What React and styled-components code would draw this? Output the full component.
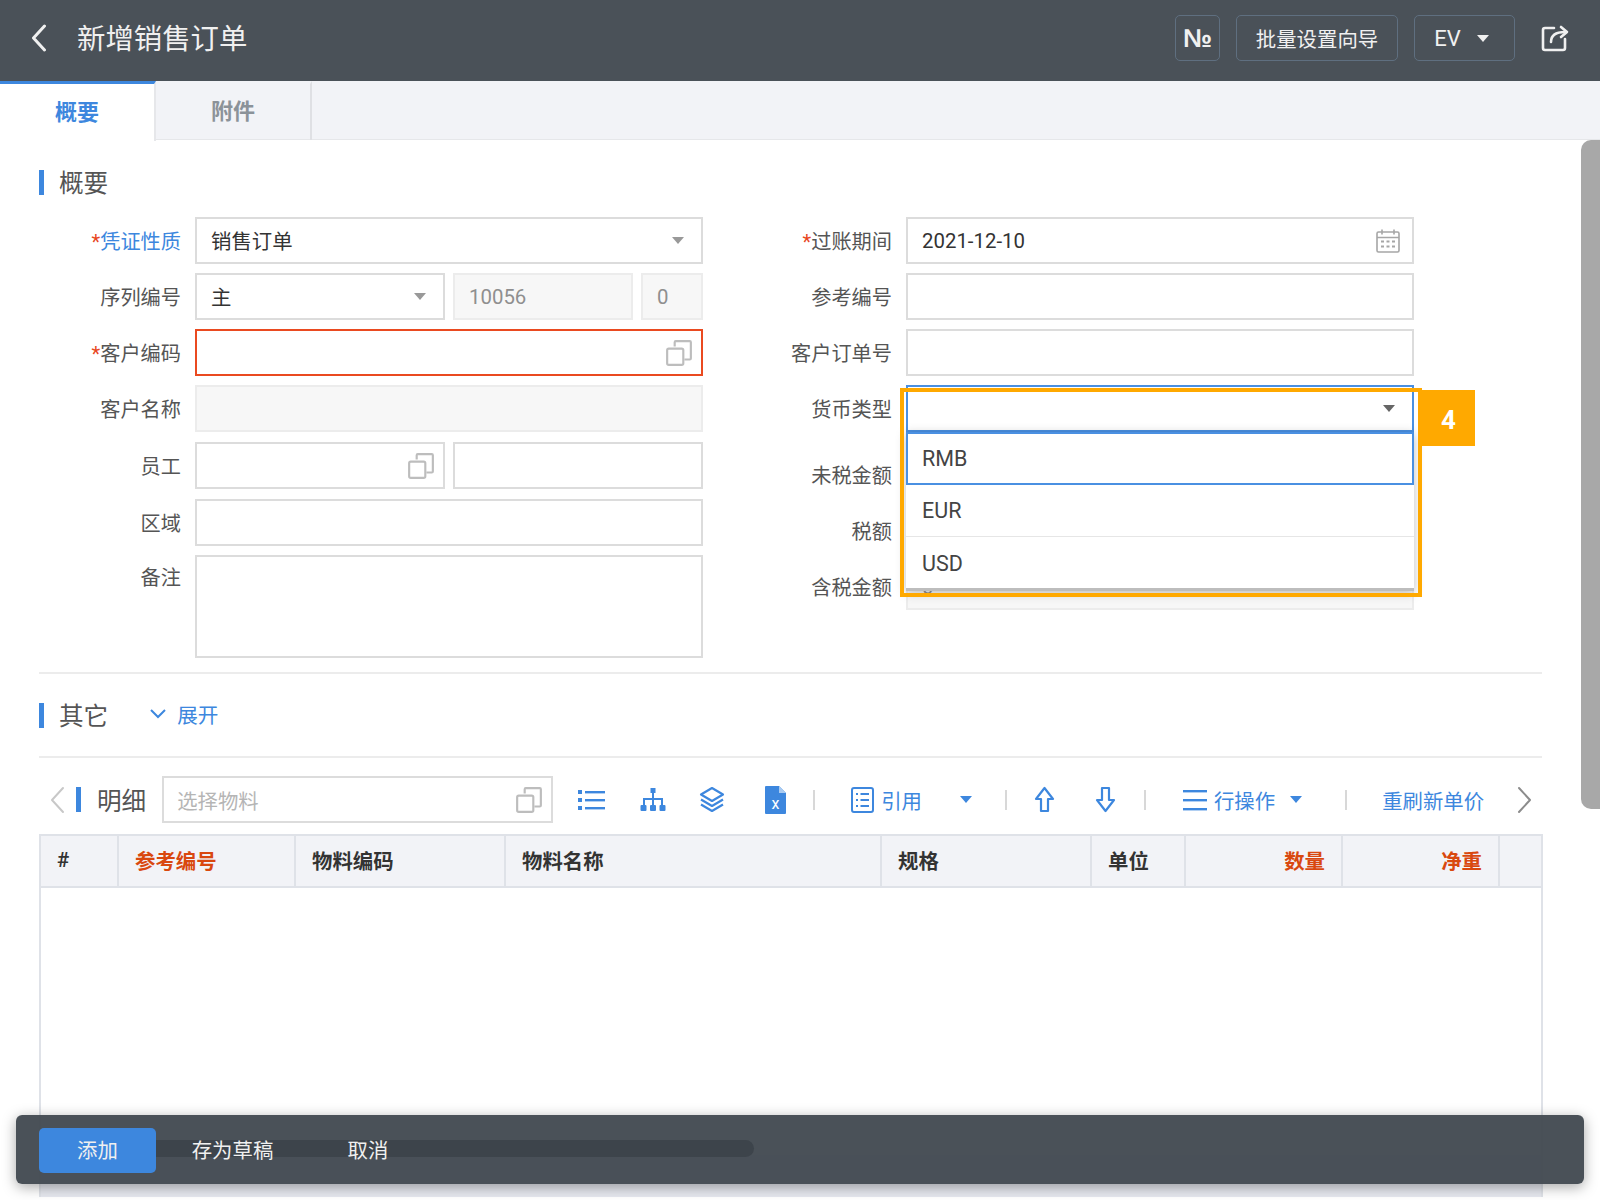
import styled, { createGlobalStyle } from "styled-components";

const GlobalStyle = createGlobalStyle`
  html, body {
    margin: 0;
    padding: 0;
    background: #fff;
    font-family: Roboto, "Noto Sans CJK SC", sans-serif;
    color: #333;
  }
  * { box-sizing: border-box; }
`;

const Page = styled.div`
  position: relative;
  width: 1600px;
  height: 1200px;
  overflow: hidden;
  background: #fff;
`;

const Header = styled.header`
  display: flex;
  align-items: center;
  height: 81px;
  padding: 0 31px 5px 30px;
  background: #4a5158;
  color: #f0f0f0;
`;

const Title = styled.h1`
  flex: 1;
  margin: 0 0 4px 30px;
  font-size: 28.4px;
  font-weight: 400;
`;

const HeadButton = styled.div`
  display: flex;
  align-items: center;
  justify-content: center;
  gap: ${(p) => p.$gap || 0}px;
  width: ${(p) => p.$w}px;
  height: 46px;
  margin-right: 16px;
  padding-right: ${(p) => p.$pr || 0}px;
  border: 1px solid #5f6f80;
  border-radius: 5px;
  font-size: ${(p) => p.$size || 20.4}px;
  font-weight: ${(p) => p.$weight || 400};
  font-family: ${(p) => p.$font || "inherit"};
`;

const ShareSlot = styled.span`
  display: flex;
  margin-left: 10px;
`;

const Tabs = styled.nav`
  display: flex;
  height: 59px;
  background: #f2f3f7;
  border-bottom: 1px solid #e6e7ea;
`;

const Tab = styled.div`
  display: flex;
  align-items: center;
  justify-content: center;
  width: 156px;
  height: ${(p) => (p.$active ? "60px" : "59px")};
  padding-bottom: 6px;
  font-size: 22px;
  font-weight: 600;
  color: ${(p) => (p.$active ? "#3d87de" : "#8b9299")};
  background: ${(p) => (p.$active ? "#fff" : "transparent")};
  border-top: 3px solid ${(p) => (p.$active ? "#3d87de" : "transparent")};
  border-right: 2px solid ${(p) => (p.$active ? "#e6e7ea" : "#dfe0e4")};
`;

const Content = styled.main`
  padding: 30px 58px 0 39px;
`;

const SectionTitle = styled.div`
  display: flex;
  align-items: center;
  height: 25px;
  padding: 0 0 3px 15px;
  border-left: 5px solid #3d87de;
  font-size: 24.6px;
  color: #555;
`;

const Expand = styled.span`
  display: flex;
  align-items: center;
  gap: 11px;
  margin-left: 42px;
  font-size: 20.6px;
  color: #3d87de;
`;

const FormGrid = styled.div`
  display: grid;
  grid-template-columns: 664px 664px;
  column-gap: 47px;
  margin-top: 22px;
`;

const Column = styled.div`
  display: flex;
  flex-direction: column;
  gap: 9px;
`;

const Row = styled.div`
  position: relative;
  display: flex;
  align-items: ${(p) => (p.$top ? "flex-start" : "center")};
  gap: 14px;
  margin-top: ${(p) => p.$mt || 0}px;
`;

const Label = styled.label`
  flex: 0 0 142px;
  text-align: right;
  font-size: 20.2px;
  line-height: ${(p) => (p.$top ? "47px" : "normal")};
  color: ${(p) => (p.$blue ? "#3d87de" : "#555")};
`;

const Star = styled.span`
  color: #e8461e;
`;

const Fields = styled.div`
  display: flex;
  flex: 1;
  gap: 8px;
`;

const Field = styled.div`
  display: flex;
  align-items: center;
  justify-content: space-between;
  flex: ${(p) => (p.$w ? `0 0 ${p.$w}px` : 1)};
  height: ${(p) => p.$h || 47}px;
  padding: 0 11px 0 14px;
  font-size: 20.4px;
  color: ${(p) => (p.$disabled ? "#8f8f8f" : "#333")};
  background: ${(p) => (p.$disabled ? "#f7f7f7" : "#fff")};
  border: ${(p) =>
    p.$error
      ? "2px solid #ea4a20"
      : p.$focus
      ? "2px solid #4a90e2"
      : p.$disabled
      ? "2px solid #ececec"
      : "2px solid #dcdcdc"};
`;

const FieldText = styled.span`
  padding-bottom: 2px;
`;

const Caret = styled.i`
  display: block;
  flex: none;
  margin-right: ${(p) => p.$mr ?? 6}px;
  margin-left: ${(p) => p.$ml || 0}px;
  border-left: 6.5px solid transparent;
  border-right: 6.5px solid transparent;
  border-top: 7px solid ${(p) => p.$color || "#999"};
`;

const Dropdown = styled.ul`
  position: absolute;
  top: 47px;
  left: 156px;
  right: 0;
  height: 159px;
  margin: 0;
  padding: 0;
  list-style: none;
  background: #fff;
  border-bottom: 3px solid #bdbdbd;
  box-shadow: 0 2px 10px rgba(0, 0, 0, 0.25);
  z-index: 2;
`;

const Option = styled.li`
  display: flex;
  align-items: center;
  height: ${(p) => (p.$active ? 53 : 52)}px;
  padding-left: ${(p) => (p.$active ? 14 : 16)}px;
  font-size: 21.5px;
  color: #444;
  border: ${(p) => (p.$active ? "2px solid #4a90e2" : "none")};
  border-bottom: ${(p) =>
    p.$active ? "2px solid #4a90e2" : p.$last ? "none" : "1px solid #e6e6e6"};
`;

const Highlight = styled.div`
  position: absolute;
  top: 3px;
  left: 150px;
  right: -8px;
  height: 209px;
  border: 4px solid #ffa900;
  z-index: 3;
`;

const Badge = styled.div`
  position: absolute;
  top: 5px;
  right: -61px;
  display: flex;
  align-items: center;
  justify-content: center;
  width: 53px;
  height: 56px;
  padding-top: 3px;
  background: #ffa900;
  color: #fff;
  font-size: 26px;
  font-weight: 700;
  z-index: 3;
`;

const Divider = styled.hr`
  margin: ${(p) => p.$mt}px 0 ${(p) => p.$mb}px;
  height: 2px;
  border: none;
  background: #ececec;
`;

const Toolbar = styled.div`
  display: flex;
  align-items: center;
  height: 47px;
  margin-top: 18px;
`;

const NavSlot = styled.span`
  display: flex;
  margin-left: ${(p) => p.$ml}px;
`;

const ToolTitle = styled.span`
  margin: 0 0 0 16px;
  padding-bottom: 2px;
  font-size: 24.6px;
  color: #555;
`;

const ToolBar = styled.span`
  width: 5px;
  height: 25px;
  margin-left: 11px;
  background: #3d87de;
`;

const MaterialInput = styled.div`
  display: flex;
  align-items: center;
  justify-content: space-between;
  width: 391px;
  height: 47px;
  margin-left: 16px;
  padding: 0 11px 0 13px;
  border: 2px solid #dcdcdc;
  font-size: 20.4px;
  color: #b5b5b5;
`;

const Tool = styled.span`
  display: flex;
  align-items: center;
  gap: ${(p) => p.$gap || 0}px;
  margin-left: ${(p) => p.$ml || 0}px;
  font-size: 20.4px;
  color: #3d87de;
`;

const ToolSep = styled.span`
  width: 2px;
  height: 20px;
  margin-left: ${(p) => p.$ml}px;
  background: #d8d8d8;
`;

const Table = styled.section`
  width: 1504px;
  margin-top: 11px;
  border: 2px solid #dfe2e8;
  border-bottom: none;
`;

const TableHead = styled.div`
  display: grid;
  grid-template-columns: 78px 177px 210px 376px 210px 94px 157px 157px 41px;
  height: 52px;
  background: #f2f3f7;
  border-bottom: 2px solid #dfe2e8;
`;

const HeadCell = styled.div`
  display: flex;
  align-items: center;
  justify-content: ${(p) => (p.$right ? "flex-end" : "flex-start")};
  padding: 0 16px 2px;
  font-size: 20.4px;
  font-weight: 600;
  color: ${(p) => (p.$red ? "#d9480f" : "#333")};
  border-right: ${(p) => (p.$last ? "none" : "2px solid #dfe2e8")};
`;

const TableBody = styled.div`
  height: 267px;
`;

const TableStrip = styled.div`
  height: 42px;
  background: #e6e8ef;
`;

const ScrollThumb = styled.div`
  position: absolute;
  top: 140px;
  right: -10px;
  width: 29px;
  height: 669px;
  border-radius: 10px;
  background: #a8a8a8;
`;

const BottomBar = styled.footer`
  position: absolute;
  top: 1115px;
  left: 16px;
  display: flex;
  align-items: center;
  width: 1568px;
  height: 69px;
  padding: 2px 0 0 23px;
  border-radius: 6px;
  background: rgba(64, 72, 79, 0.95);
  box-shadow: 0 3px 14px rgba(0, 0, 0, 0.35);
`;

const BarTrack = styled.div`
  position: absolute;
  top: 25px;
  left: 130px;
  width: 608px;
  height: 17px;
  border-radius: 0 9px 9px 0;
  background: #3d444b;
`;

const BarButton = styled.div`
  position: relative;
  display: flex;
  align-items: center;
  justify-content: center;
  width: ${(p) => p.$w}px;
  height: 45px;
  padding-bottom: 3px;
  border-radius: 5px;
  font-size: 20.4px;
  color: #f0f0f0;
  background: ${(p) => (p.$primary ? "#3d87de" : "transparent")};
`;

const CopySvg = styled.svg`
  margin-right: -3px;
`;

function CopyIcon() {
  return (
    <CopySvg width="28" height="28" viewBox="0 0 26 26" fill="none" stroke="#bdbdbd" strokeWidth="2">
      <path d="M9 7V3a1 1 0 0 1 1-1h13a1 1 0 0 1 1 1v15a1 1 0 0 1-1 1h-5" />
      <rect x="2" y="9" width="15" height="15" rx="1.5" />
    </CopySvg>
  );
}

function CalendarIcon() {
  return (
    <svg width="26" height="26" viewBox="0 0 26 26" fill="none" stroke="#a6a6a6" strokeWidth="1.6">
      <rect x="2" y="4" width="22" height="20" rx="1.5" />
      <path d="M2 9.5h22M7 1.5v5M19 1.5v5" />
      <path d="M6 13.5h3M11.5 13.5h3M17 13.5h3M6 18.5h3M11.5 18.5h3M17 18.5h3" strokeWidth="2" />
    </svg>
  );
}

function ShareIcon() {
  return (
    <svg width="28" height="28" viewBox="0 0 28 28" fill="none" stroke="#f0f0f0" strokeWidth="2.6" strokeLinecap="round" strokeLinejoin="round">
      <path d="M13 4H4a2 2 0 0 0-2 2v18a2 2 0 0 0 2 2h18a2 2 0 0 0 2-2v-9" />
      <path d="M10 18c0-6 4-10 14-10" />
      <path d="M20 3l6 5-6 5" />
    </svg>
  );
}

function ChevronIcon({ dir = "left", color = "#c8c8c8", w = 16, h = 28, sw = 2 }) {
  const d = dir === "left" ? "M14 2L3 14l11 12" : "M2 2l11 12L2 26";
  return (
    <svg width={w} height={h} viewBox="0 0 16 28" fill="none" stroke={color} strokeWidth={sw} strokeLinecap="round" strokeLinejoin="round">
      <path d={d} />
    </svg>
  );
}

function ListIcon() {
  return (
    <svg width="27" height="22" viewBox="0 0 27 22" fill="#3d87de">
      <rect x="0" y="1" width="4" height="4" />
      <rect x="0" y="9" width="4" height="4" />
      <rect x="0" y="17" width="4" height="4" />
      <rect x="7" y="2" width="20" height="2.4" />
      <rect x="7" y="10" width="20" height="2.4" />
      <rect x="7" y="18" width="20" height="2.4" />
    </svg>
  );
}

function TreeIcon() {
  return (
    <svg width="26" height="24" viewBox="0 0 26 24" fill="#3d87de">
      <rect x="10.5" y="0" width="5" height="5" />
      <rect x="12" y="5" width="2" height="6" />
      <rect x="3" y="10" width="20" height="2" />
      <rect x="3" y="10" width="2" height="7" />
      <rect x="21" y="10" width="2" height="7" />
      <rect x="12" y="10" width="2" height="7" />
      <rect x="0.5" y="17" width="6" height="6" rx="1" />
      <rect x="10" y="17" width="6" height="6" rx="1" />
      <rect x="19.5" y="17" width="6" height="6" rx="1" />
    </svg>
  );
}

function LayersIcon() {
  return (
    <svg width="26" height="27" viewBox="0 0 26 27" fill="none" stroke="#3d87de" strokeWidth="2.2" strokeLinejoin="round">
      <path d="M13 2l11 6.5L13 15 2 8.5z" />
      <path d="M2 13.5L13 20l11-6.5" />
      <path d="M2 18.5L13 25l11-6.5" />
    </svg>
  );
}

function ExcelIcon() {
  return (
    <svg width="21" height="28" viewBox="0 0 21 28">
      <path d="M1 0h13l7 7v20a1 1 0 0 1-1 1H1a1 1 0 0 1-1-1V1a1 1 0 0 1 1-1z" fill="#3d87de" />
      <path d="M14 0v7h7z" fill="#a9cbf2" />
      <text x="10.5" y="23" textAnchor="middle" fontSize="16" fill="#fff" fontFamily="Roboto, sans-serif">x</text>
    </svg>
  );
}

function DocIcon() {
  return (
    <svg width="23" height="26" viewBox="0 0 23 26" fill="none" stroke="#3d87de" strokeWidth="2">
      <rect x="1" y="1" width="21" height="24" rx="2" />
      <path d="M5 7h2M5 13h2M5 19h2M9.5 7H18M9.5 13H18M9.5 19H18" strokeWidth="1.8" />
    </svg>
  );
}

function ArrowIcon({ down }) {
  return (
    <svg width="21" height="27" viewBox="0 0 21 27" fill="none" stroke="#3d87de" strokeWidth="2.2" strokeLinejoin="round">
      <path d={down ? "M10.5 25L2 14h5V2h7v12h5z" : "M10.5 2L2 13h5v12h7V13h5z"} />
    </svg>
  );
}

function MenuIcon() {
  return (
    <svg width="24" height="22" viewBox="0 0 24 22" fill="#3d87de">
      <rect x="0" y="1" width="24" height="2.4" />
      <rect x="0" y="10" width="24" height="2.4" />
      <rect x="0" y="19" width="24" height="2.4" />
    </svg>
  );
}

const tableHeads = [
  { text: "#" },
  { text: "参考编号", red: true },
  { text: "物料编码" },
  { text: "物料名称" },
  { text: "规格" },
  { text: "单位" },
  { text: "数量", red: true, right: true },
  { text: "净重", red: true, right: true },
  { text: "", last: true },
];

export default function App() {
  return (
    <Page>
      <GlobalStyle />
      <Header>
        <ChevronIcon color="#f0f0f0" w={17} h={28} sw={3} />
        <Title>新增销售订单</Title>
        <HeadButton $w={45} $size={26} $weight={700} $font='"Liberation Sans", sans-serif'>№</HeadButton>
        <HeadButton $w={162}>批量设置向导</HeadButton>
        <HeadButton $w={101} $size={22} $gap={16} $pr={6}>
          EV
          <Caret $color="#f0f0f0" $mr={0} />
        </HeadButton>
        <ShareSlot>
          <ShareIcon />
        </ShareSlot>
      </Header>

      <Tabs>
        <Tab $active>概要</Tab>
        <Tab>附件</Tab>
      </Tabs>

      <Content>
        <SectionTitle>概要</SectionTitle>
        <FormGrid>
          <Column>
            <Row>
              <Label $blue><Star>*</Star>凭证性质</Label>
              <Fields>
                <Field>
                  <FieldText>销售订单</FieldText>
                  <Caret />
                </Field>
              </Fields>
            </Row>
            <Row>
              <Label>序列编号</Label>
              <Fields>
                <Field $w={250}>
                  <FieldText>主</FieldText>
                  <Caret />
                </Field>
                <Field $w={180} $disabled>10056</Field>
                <Field $disabled>0</Field>
              </Fields>
            </Row>
            <Row>
              <Label><Star>*</Star>客户编码</Label>
              <Fields>
                <Field $error>
                  <span />
                  <CopyIcon />
                </Field>
              </Fields>
            </Row>
            <Row>
              <Label>客户名称</Label>
              <Fields>
                <Field $disabled />
              </Fields>
            </Row>
            <Row $mt={1}>
              <Label>员工</Label>
              <Fields>
                <Field $w={250}>
                  <span />
                  <CopyIcon />
                </Field>
                <Field />
              </Fields>
            </Row>
            <Row $mt={1}>
              <Label>区域</Label>
              <Fields>
                <Field />
              </Fields>
            </Row>
            <Row $top>
              <Label $top>备注</Label>
              <Fields>
                <Field $h={103} />
              </Fields>
            </Row>
          </Column>

          <Column>
            <Row>
              <Label><Star>*</Star>过账期间</Label>
              <Fields>
                <Field>
                  2021-12-10
                  <CalendarIcon />
                </Field>
              </Fields>
            </Row>
            <Row>
              <Label>参考编号</Label>
              <Fields>
                <Field />
              </Fields>
            </Row>
            <Row>
              <Label>客户订单号</Label>
              <Fields>
                <Field />
              </Fields>
            </Row>
            <Row>
              <Label>货币类型</Label>
              <Fields>
                <Field $focus>
                  <span />
                  <Caret $color="#666" />
                </Field>
              </Fields>
              <Dropdown>
                <Option $active>RMB</Option>
                <Option>EUR</Option>
                <Option $last>USD</Option>
              </Dropdown>
              <Highlight />
              <Badge>4</Badge>
            </Row>
            <Row $mt={10}>
              <Label>未税金额</Label>
              <Fields>
                <Field $disabled />
              </Fields>
            </Row>
            <Row>
              <Label>税额</Label>
              <Fields>
                <Field $disabled />
              </Fields>
            </Row>
            <Row>
              <Label>含税金额</Label>
              <Fields>
                <Field $disabled>0</Field>
              </Fields>
            </Row>
          </Column>
        </FormGrid>

        <Divider $mt={14} $mb={29} />
        <SectionTitle>
          其它
          <Expand>
            <svg width="16" height="10" viewBox="0 0 16 10" fill="none" stroke="#3d87de" strokeWidth="2">
              <path d="M1 1l7 7 7-7" />
            </svg>
            展开
          </Expand>
        </SectionTitle>
        <Divider $mt={28} $mb={0} />

        <Toolbar>
          <NavSlot $ml={10}>
            <ChevronIcon />
          </NavSlot>
          <ToolBar />
          <ToolTitle>明细</ToolTitle>
          <MaterialInput>
            选择物料
            <CopyIcon />
          </MaterialInput>
          <Tool $ml={25}><ListIcon /></Tool>
          <Tool $ml={35}><TreeIcon /></Tool>
          <Tool $ml={33}><LayersIcon /></Tool>
          <Tool $ml={40}><ExcelIcon /></Tool>
          <ToolSep $ml={27} />
          <Tool $ml={36} $gap={7}><DocIcon />引用</Tool>
          <Caret $color="#3d87de" $ml={38} $mr={0} />
          <ToolSep $ml={33} />
          <Tool $ml={27}><ArrowIcon /></Tool>
          <Tool $ml={40}><ArrowIcon down /></Tool>
          <ToolSep $ml={28} />
          <Tool $ml={37} $gap={7}><MenuIcon />行操作</Tool>
          <Caret $color="#3d87de" $ml={15} $mr={0} />
          <ToolSep $ml={43} />
          <Tool $ml={35}>重刷新单价</Tool>
          <NavSlot $ml={33}>
            <ChevronIcon dir="right" color="#8c8c8c" />
          </NavSlot>
        </Toolbar>

        <Table>
          <TableHead>
            {tableHeads.map((h, i) => (
              <HeadCell key={i} $red={h.red} $right={h.right} $last={h.last}>
                {h.text}
              </HeadCell>
            ))}
          </TableHead>
          <TableBody />
          <TableStrip />
        </Table>
      </Content>

      <ScrollThumb />

      <BottomBar>
        <BarTrack />
        <BarButton $primary $w={117}>添加</BarButton>
        <BarButton $w={153}>存为草稿</BarButton>
        <BarButton $w={118}>取消</BarButton>
      </BottomBar>
    </Page>
  );
}
